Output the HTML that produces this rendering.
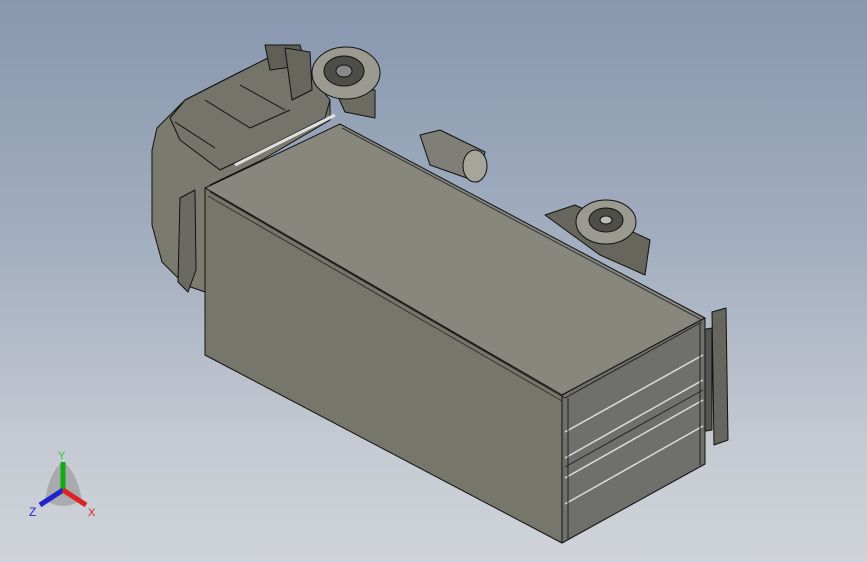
<!DOCTYPE html>
<html><head><meta charset="utf-8"><style>
html,body{margin:0;padding:0}
body{width:867px;height:562px;overflow:hidden;background:linear-gradient(180deg,#8797ae 0%,#a4afc0 45%,#c6cbd3 80%,#cfd3d9 100%);font-family:"Liberation Sans",sans-serif}
svg{position:absolute;left:0;top:0}
</style></head><body>
<svg width="867" height="562" viewBox="0 0 867 562">
<g stroke="#111" stroke-width="1" stroke-linejoin="round">
<polygon points="157,128 185,100 240,72 268,58 300,62 330,100 330,120 262,160 210,185 205,292 185,285 162,262 152,225 152,150" fill="#7a7a6e"/>
<polygon points="185,100 240,72 268,58 300,62 330,100 325,118 262,150 220,170 180,140 170,118" fill="#74746a"/>
<polyline points="205,100 250,128 290,110" fill="none"/>
<polyline points="240,85 285,110" fill="none"/>
<polyline points="175,122 215,148" fill="none"/>
<polygon points="265,45 300,45 305,65 270,70" fill="#5f5f56"/>
<polygon points="285,48 310,52 312,90 292,100" fill="#66665d"/>
<polygon points="180,198 195,190 196,270 188,292 178,282" fill="#6a6a62"/>
<line x1="235" y1="165" x2="335" y2="115" stroke="#e0e0e0" stroke-width="3"/>
<polygon points="335,90 375,90 375,118 345,112" fill="#6c6c62"/>
<ellipse cx="346" cy="73" rx="34" ry="26" fill="#9a9a90"/>
<ellipse cx="344" cy="71" rx="20" ry="15" fill="#4e4e48"/>
<ellipse cx="344" cy="71" rx="8" ry="6" fill="#888"/>
<polygon points="420,135 440,130 485,152 478,182 430,165" fill="#7f7f77"/>
<ellipse cx="475" cy="166" rx="12" ry="16" fill="#a6a59c"/>
<polygon points="545,215 575,205 650,240 645,275 600,255" fill="#66665c"/>
<ellipse cx="606" cy="222" rx="30" ry="22" fill="#9a9a90"/>
<ellipse cx="606" cy="220" rx="17" ry="12" fill="#4e4e48"/>
<ellipse cx="606" cy="220" rx="6" ry="4" fill="#bbb"/>
<polygon points="712,312 726,308 728,440 714,445" fill="#66665f"/>
<polygon points="700,330 712,328 712,430 700,432" fill="#555550"/>
<polygon points="205,188 340,124 705,318 562,395" fill="#87877e"/>
<polygon points="205,188 562,395 562,543 205,355" fill="#76766a"/>
<polygon points="562,395 705,318 705,464 562,543" fill="#6f6f6c"/>
<polyline points="210,192 565,398 702,322" fill="none" stroke="#222"/>
<polyline points="342,128 702,320" fill="none" stroke="#333"/>
<polyline points="208,196 562,401" fill="none" stroke="#333"/>
</g>
<g stroke="#ddd" stroke-width="1.5">
<line x1="565" y1="432" x2="703" y2="355"/>
<line x1="565" y1="458" x2="703" y2="380"/>
<line x1="565" y1="478" x2="703" y2="400"/>
<line x1="565" y1="504" x2="703" y2="426"/>
</g>
<g stroke="#222" stroke-width="1">
<line x1="565" y1="467" x2="703" y2="390"/>
<line x1="568" y1="398" x2="568" y2="540"/>
<line x1="700" y1="323" x2="700" y2="465"/>
</g>
<g>
<path d="M45,500 Q50,470 63,462 Q76,470 82,500 Q63,512 45,500Z" fill="#888" opacity="0.5"/>
<line x1="63" y1="490" x2="63" y2="462" stroke="#1a1" stroke-width="5"/>
<line x1="63" y1="490" x2="40" y2="505" stroke="#22c" stroke-width="5"/>
<line x1="63" y1="490" x2="86" y2="505" stroke="#d22" stroke-width="5"/>
<text x="58" y="459" font-size="11" fill="#2c2">Y</text>
<text x="29" y="516" font-size="12" fill="#22d">Z</text>
<text x="88" y="516" font-size="11" fill="#d22">X</text>
</g>
</svg>
</body></html>
